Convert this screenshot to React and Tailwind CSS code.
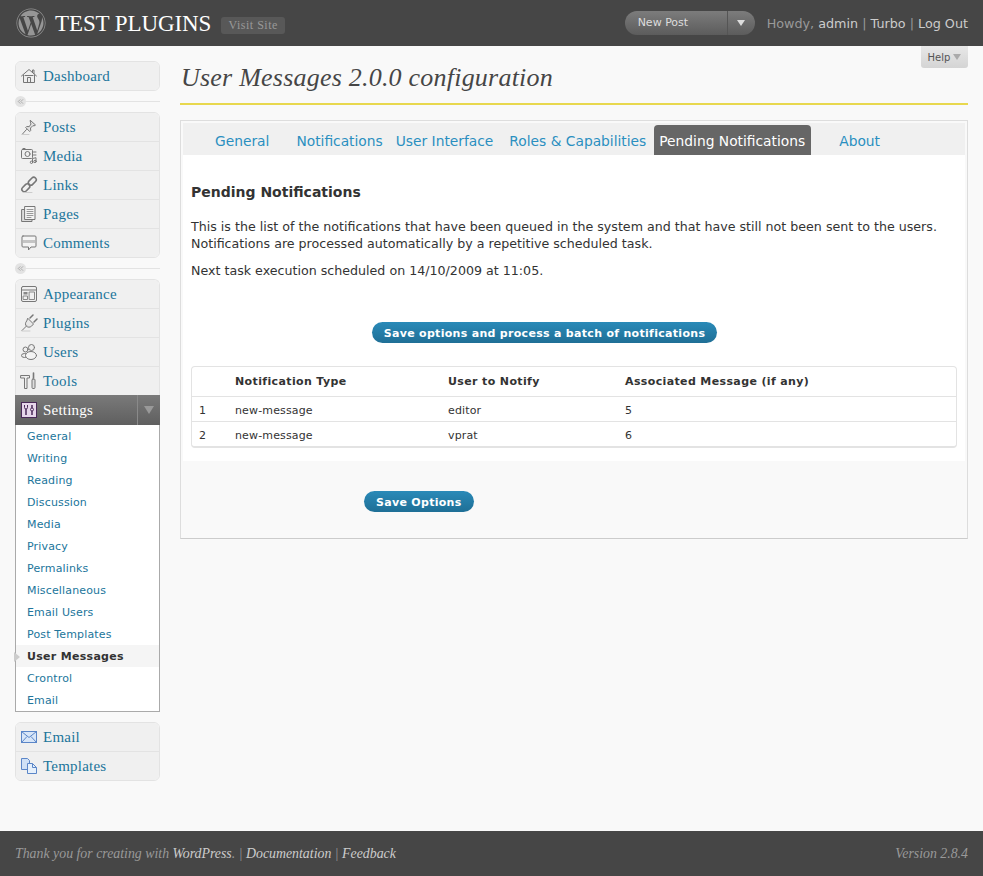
import React from 'react';
import { FaWordpress } from 'react-icons/fa';
import { ChevronsLeft } from 'lucide-react';

const SERIF = "font-['Liberation_Serif',Georgia,serif]";

const Icon = ({ children }) => (
  <svg width="18" height="18" viewBox="0 0 18 18" fill="none" stroke="#777" strokeWidth="1" strokeLinejoin="round" strokeLinecap="round">
    {children}
  </svg>
);

const HomeIcon = () => (
  <Icon>
    <path d="M1.5 9 9 2.5 16.5 9M12.5 5.5V3h1.5v3.8" />
    <path d="M3.5 8v7.5h11V8" fill="#eee" />
    <path d="M7.5 15.5v-5h3v5M5 8.5h8" />
  </Icon>
);
const PinIcon = () => (
  <Icon>
    <path d="M10.5 2.5 15.5 7l-1.5 1-1-.5-2.5 2.5.2 2.5-1 1-4-4 1-1 2.5.2L11 6l-.5-1.5z" fill="#e4e4e4" />
    <path d="m6.5 11.5-4 4.5" />
    <path d="M2 16.5h7" stroke="#ccc" />
  </Icon>
);
const MediaIcon = () => (
  <Icon>
    <rect x="1.5" y="2.5" width="11" height="9" rx="1" fill="#eee" />
    <circle cx="7.5" cy="7" r="2.5" />
    <path d="M3 1.5h2" />
    <path d="M13.5 5h2.5M13.5 8h2.5" />
    <path d="M12.5 15v-3.5l3.5-.8V14" />
    <circle cx="11.5" cy="15.3" r="1.2" />
    <circle cx="15" cy="14.5" r="1.2" />
  </Icon>
);
const LinkIcon = () => (
  <Icon>
    <rect x="-4.5" y="-2.5" width="9" height="5" rx="2.5" transform="translate(12.3 5.2) rotate(-45)" strokeWidth="1.6" />
    <rect x="-4.5" y="-2.5" width="9" height="5" rx="2.5" transform="translate(5.8 11.8) rotate(-45)" strokeWidth="1.6" />
    <path d="M3 16.5h9" stroke="#ccc" />
  </Icon>
);
const PagesIcon = () => (
  <Icon>
    <rect x="2" y="4.5" width="10" height="12" fill="#ddd" />
    <rect x="5" y="1.5" width="10" height="13" fill="#f4f4f4" />
    <path d="M7 4.5h6M7 6.5h6M7 8.5h6M7 10.5h6M7 12.5h4" stroke="#999" />
  </Icon>
);
const CommentIcon = () => (
  <Icon>
    <path d="M3 2h12a1 1 0 0 1 1 1v9a1 1 0 0 1-1 1h-4l-2.5 3v-3H3a1 1 0 0 1-1-1V3a1 1 0 0 1 1-1z" fill="#f4f4f4" />
    <rect x="3" y="6" width="12" height="3" fill="#c4c4c4" stroke="none" />
  </Icon>
);
const AppearanceIcon = () => (
  <Icon>
    <rect x="1.5" y="1.5" width="15" height="15" rx="1.5" fill="#f0f0f0" />
    <path d="M1.5 5h15" />
    <rect x="3.5" y="7" width="4" height="2.5" fill="#888" stroke="none" />
    <rect x="3.5" y="11" width="4" height="3.5" stroke="#888" />
    <rect x="9.5" y="7" width="5" height="7.5" stroke="#888" />
  </Icon>
);
const PlugIcon = () => (
  <Icon>
    <path d="M8 4.5 13.5 10l-2 2.2c-1.6 1.3-3.6 1.3-5 0s-1.4-3.4 0-5z" fill="#e8e8e8" />
    <path d="m10 4 3-3M14 8l3-3" strokeWidth="1.5" />
    <path d="M6.5 12 2 16.5" />
    <path d="M2 17h8" stroke="#ccc" />
  </Icon>
);
const UsersIcon = () => (
  <Icon>
    <circle cx="5.5" cy="6.5" r="2.5" fill="#eee" />
    <circle cx="11.5" cy="4.5" r="3" fill="#eee" />
    <ellipse cx="4.5" cy="12.5" rx="3" ry="2" fill="#eee" />
    <ellipse cx="11" cy="12.5" rx="5.5" ry="4" fill="#f4f4f4" />
  </Icon>
);
const ToolsIcon = () => (
  <Icon>
    <path d="M1 3.5h8.5v2.5H7v10.5H4.5V6H1z" fill="#eee" />
    <path d="M13.5 1v5" strokeWidth="1.6" />
    <rect x="12" y="7" width="3" height="9.5" rx="1" fill="#ddd" />
  </Icon>
);
const SettingsIcon = () => (
  <svg width="16" height="16" viewBox="0 0 16 16">
    <rect x="0.5" y="0.5" width="15" height="15" fill="#e6d6ea" stroke="#4a2a58" />
    <path d="M5 7v6M11 3v3M11 9v4" stroke="#4a2a58" strokeWidth="1.5" />
    <path d="M3.5 3v2.5a1.5 1.5 0 0 0 3 0V3" fill="none" stroke="#4a2a58" />
    <circle cx="11" cy="7.5" r="1.5" fill="none" stroke="#4a2a58" />
  </svg>
);
const MailIcon = () => (
  <svg width="16" height="12" viewBox="0 0 16 12" stroke="#5b86c8" strokeWidth="1">
    <rect x="0.5" y="0.5" width="15" height="11" fill="#d8e6f8" />
    <path d="m.5.5 7.5 6 7.5-6M.5 11.5 6 5.5M15.5 11.5 10 5.5" fill="none" />
  </svg>
);
const TemplatesIcon = () => (
  <svg width="16" height="16" viewBox="0 0 16 16" stroke="#5b86c8" strokeWidth="1">
    <path d="M.5.5h6l2 2v9h-8z" fill="#cfe0f6" />
    <path d="M6.5 5.5h5l4 4v6h-9z" fill="#e6f0fb" />
    <path d="M11.5 5.5v4h4" fill="none" />
  </svg>
);

const MenuItem = ({ icon: ItemIcon, label, last }) => (
  <div
    className={`flex items-center pl-[4px] bg-[#f0f0f0] ${
      last ? 'h-[28px]' : 'h-[29px] border-b border-b-[#e3e3e3] shadow-[0_1px_0_#fff]'
    }`}
  >
    <span className="w-[18px] flex justify-center">
      <ItemIcon />
    </span>
    <span className={`ml-[5px] ${SERIF} text-[15px] tracking-[0.22px] text-[#21759b]`}>{label}</span>
  </div>
);

const MenuGroup = ({ items }) => (
  <div className="border border-[#e3e3e3] rounded-[6px] overflow-hidden">
    {items.map(([icon, label], i) => (
      <MenuItem key={label} icon={icon} label={label} last={i === items.length - 1} />
    ))}
  </div>
);

const Separator = () => (
  <div className="h-[21px] flex items-center relative">
    <div className="flex-1 h-[1px] bg-[#e3e3e3]" />
    <span className="absolute left-0 w-[11px] h-[11px] rounded-full bg-[#e3e3e3] flex items-center justify-center text-[#999]">
      <ChevronsLeft size={9} />
    </span>
  </div>
);

const subItems = [
  'General', 'Writing', 'Reading', 'Discussion', 'Media', 'Privacy', 'Permalinks',
  'Miscellaneous', 'Email Users', 'Post Templates', 'User Messages', 'Crontrol', 'Email',
];

const tabs = [
  ['General', 'ml-[32px]'],
  ['Notifications', 'ml-[27px]'],
  ['User Interface', 'ml-[13px]'],
  ['Roles & Capabilities', 'ml-[16px]'],
  ['Pending Notifications', 'ml-[8px]'],
  ['About', 'ml-[28px]'],
];

const rows = [
  ['1', 'new-message', 'editor', '5'],
  ['2', 'new-message', 'vprat', '6'],
];

const BlueButton = ({ children, className = 'pt-[1px]' }) => (
  <button className={`h-[21px] ${className} px-[12px] rounded-full bg-gradient-to-b from-[#2a8ab8] to-[#1f6f96] text-white text-[11px] font-bold tracking-[0.3px] leading-none`}>
    {children}
  </button>
);

export default function App() {
  return (
    <div className="min-h-screen flex flex-col bg-[#f9f9f9] font-['DejaVu_Sans',Verdana,sans-serif] text-[#333]">
      {/* Header */}
      <header className="h-[46px] bg-[#464646] flex items-center pl-[16px] pr-[15px]">
        <span className="w-[30px] h-[30px] text-[#969696]">
          <FaWordpress size={30} />
        </span>
        <span className={`ml-[9px] ${SERIF} text-[23px] tracking-[-0.1px] text-white leading-none`}>TEST PLUGINS</span>
        <span className={`ml-[10px] mt-[4px] h-[17px] w-[64px] rounded-[3px] bg-[#585858] flex items-center justify-center ${SERIF} text-[12px] tracking-[0.5px] text-[#999]`}>
          Visit Site
        </span>
        <div className="ml-auto h-[24px] w-[130px] rounded-full bg-gradient-to-b from-[#7c7c7c] to-[#5c5c5c] flex items-center text-[11px] text-[#ddd]">
          <span className="w-[102px] pl-[13px]">New Post</span>
          <span className="h-full w-[1px] bg-[#555]" />
          <span className="ml-[9px] w-0 h-0 border-x-[4px] border-x-transparent border-t-[6px] border-t-[#ddd]" />
        </div>
        <div className="ml-[12px] pt-[1px] text-[12.75px] text-[#999]">
          Howdy, <span className="text-[#ccc]">admin</span> | <span className="text-[#ccc]">Turbo</span> | <span className="text-[#ccc]">Log Out</span>
        </div>
      </header>

      <div className="flex-1 flex pl-[15px] pr-[15px]">
        {/* Sidebar */}
        <aside className="w-[145px] pt-[15px] shrink-0">
          <MenuGroup items={[[HomeIcon, 'Dashboard']]} />
          <Separator />
          <MenuGroup
            items={[
              [PinIcon, 'Posts'],
              [MediaIcon, 'Media'],
              [LinkIcon, 'Links'],
              [PagesIcon, 'Pages'],
              [CommentIcon, 'Comments'],
            ]}
          />
          <Separator />
          <div className="border border-[#e3e3e3] border-b-0 rounded-t-[6px] overflow-hidden">
            <MenuItem icon={AppearanceIcon} label="Appearance" />
            <MenuItem icon={PlugIcon} label="Plugins" />
            <MenuItem icon={UsersIcon} label="Users" />
            <MenuItem icon={ToolsIcon} label="Tools" last />
          </div>
          <div className="h-[30px] flex items-center pl-[6px] bg-gradient-to-b from-[#7a7a7a] to-[#5f5f5f]">
            <SettingsIcon />
            <span className={`ml-[6px] ${SERIF} text-[15px] tracking-[0.22px] text-white`}>Settings</span>
            <span className="ml-auto h-full w-[23px] border-l border-l-[#8a8a8a] flex items-center justify-center">
              <span className="w-0 h-0 border-x-[5px] border-x-transparent border-t-[8px] border-t-[#999]" />
            </span>
          </div>
          <div className="relative border border-[#aaa] border-t-0 bg-white">
            {subItems.map((s) =>
              s === 'User Messages' ? (
                <div key={s} className="relative h-[22px] pt-[2px] flex items-center pl-[11px] bg-[#f5f5f5] text-[11px] font-bold tracking-[0.3px] text-[#333]">
                  <span className="absolute left-[-2px] w-0 h-0 border-y-[5px] border-y-transparent border-l-[6px] border-l-[#ccc]" />
                  {s}
                </div>
              ) : (
                <div key={s} className="h-[22px] pt-[2px] flex items-center pl-[11px] text-[11px] tracking-[0.15px] text-[#21759b]">
                  {s}
                </div>
              ),
            )}
          </div>
          <div className="mt-[10px]">
            <MenuGroup items={[[MailIcon, 'Email'], [TemplatesIcon, 'Templates']]} />
          </div>
        </aside>

        {/* Content */}
        <main className="flex-1 pl-[20px] min-w-0 relative">
          <div className="absolute right-0 top-0 w-[47px] h-[22px] rounded-b-[3px] bg-gradient-to-b from-[#e8e8e8] to-[#d4d4d4] flex items-center justify-center text-[10px] text-[#555]">
            Help
            <span className="ml-[3px] w-0 h-0 border-x-[4px] border-x-transparent border-t-[6px] border-t-[#aaa]" />
          </div>
          <h1 className={`h-[59px] pt-[15px] pl-[1px] border-b-2 border-b-[#e8d84e] ${SERIF} italic text-[26px] leading-[34px] tracking-[0.22px] text-[#464646]`}>
            User Messages 2.0.0 configuration
          </h1>
          <div className="mt-[15px] border border-[#ddd] border-b-[#ccc] p-[2px] pb-0 h-[419px]">
            <div className="h-[32px] bg-[#f0f0f0] flex items-end text-[13.8px] text-[#2a8fc0]">
              {tabs.map(([t, m]) =>
                t === 'Pending Notifications' ? (
                  <span key={t} className={`${m} h-[30px] pt-[3px] pl-[5px] pr-[6px] rounded-t-[4px] bg-[#666] text-white flex items-center`}>
                    {t}
                  </span>
                ) : (
                  <span key={t} className={`${m} h-[30px] pt-[3px] flex items-center`}>
                    {t}
                  </span>
                ),
              )}
            </div>
            <div className="bg-white h-[306px] pt-[29px] px-[8px]">
              <h2 className="text-[14px] font-bold leading-[17px] text-[#333]">Pending Notifications</h2>
              <p className="mt-[17px] text-[12.65px] leading-[17px]">
                This is the list of the notifications that have been queued in the system and that have still not been sent to the users.
                <br />
                Notifications are processed automatically by a repetitive scheduled task.
              </p>
              <p className="mt-[10px] text-[12.65px] leading-[17px]">Next task execution scheduled on 14/10/2009 at 11:05.</p>
              <div className="mt-[43px] flex justify-center pr-[59px]">
                <BlueButton>Save options and process a batch of notifications</BlueButton>
              </div>
              <div className="mt-[23px] border border-[#e3e3e3] border-b-2 rounded-[4px] text-[11px] tracking-[0.15px]">
                <div className="h-[30px] pt-[1px] flex items-center font-bold tracking-[0.37px] border-b border-b-[#e3e3e3]">
                  <span className="w-[43px] pl-[7px]" />
                  <span className="w-[213px]">Notification Type</span>
                  <span className="w-[177px]">User to Notify</span>
                  <span>Associated Message (if any)</span>
                </div>
                {rows.map((r, i) => (
                  <div key={r[0]} className={`flex items-center ${i === 0 ? 'h-[25px] pt-[4px] border-b border-b-[#e3e3e3]' : 'h-[24px] pt-[5px]'}`}>
                    <span className="w-[43px] pl-[7px]">{r[0]}</span>
                    <span className="w-[213px]">{r[1]}</span>
                    <span className="w-[177px]">{r[2]}</span>
                    <span>{r[3]}</span>
                  </div>
                ))}
              </div>
            </div>
            <div className="pt-[28px] pl-[181px]">
              <BlueButton className="pt-[3px]">Save Options</BlueButton>
            </div>
          </div>
        </main>
      </div>

      {/* Footer */}
      <footer className={`h-[45px] pt-[1px] bg-[#464646] flex items-center justify-between px-[15px] ${SERIF} italic text-[13.85px] text-[#999]`}>
        <div>
          Thank you for creating with <span className="text-[#ccc]">WordPress</span>. | <span className="text-[#ccc]">Documentation</span> | <span className="text-[#ccc]">Feedback</span>
        </div>
        <div>Version 2.8.4</div>
      </footer>
    </div>
  );
}
